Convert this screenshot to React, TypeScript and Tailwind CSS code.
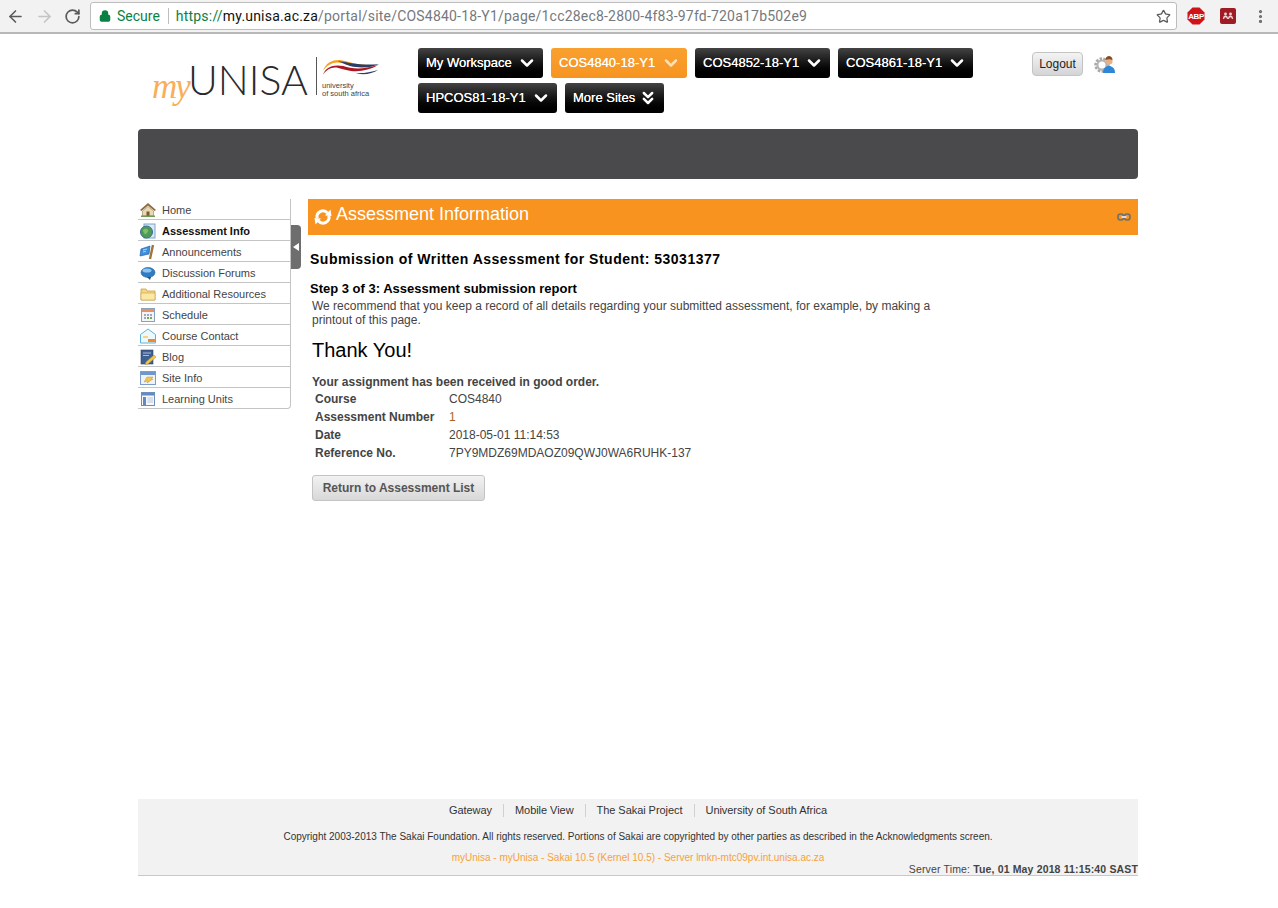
import { ChevronDown, ChevronsDown, ArrowLeft, ArrowRight, RotateCw, Lock, Star, EllipsisVertical } from 'lucide-react';

const sans = { fontFamily: '"Liberation Sans", Arial, sans-serif' };

// small hand drawn tool icons, 16px
function HomeIcon() {
  return (
    <svg width="18" height="16" viewBox="0 0 18 16">
      <path d="M1 8 9 1l8 7-1.5 1L9 3.5 2.5 9z" fill="#8a6a3c" />
      <path d="M3.5 9 9 4.5 14.5 9v5h-11z" fill="#e9d8b4" stroke="#9a8258" strokeWidth=".6" />
      <rect x="7.5" y="9.5" width="3" height="4.5" fill="#7b5a34" />
      <rect x="2" y="13.5" width="14" height="1.5" fill="#6f9a5a" />
    </svg>
  );
}
function AssessIcon() {
  return (
    <svg width="18" height="16" viewBox="0 0 18 16">
      <rect x="5" y="1" width="11" height="14" fill="#dbe8f6" stroke="#7ea3cc" />
      <circle cx="7.500" cy="9" r="6" fill="#4f9a58" stroke="#3a6d8f" />
      <path d="M4 7c2-2 4-1 5 0s-1 3-2 4-3-2-3-4z" fill="#7fbf6a" />
    </svg>
  );
}
function AnnounceIcon() {
  return (
    <svg width="18" height="16" viewBox="0 0 18 16">
      <path d="M2 5 11 2l-1 8-9 2z" fill="#3f8fdc" stroke="#2a62a8" strokeWidth=".7" />
      <path d="M14 1 11 15" stroke="#a0743c" strokeWidth="2.4" />
      <path d="M4 6l4-1M4 8l3-.7" stroke="#cfe6fb" strokeWidth=".8" />
    </svg>
  );
}
function ForumIcon() {
  return (
    <svg width="18" height="16" viewBox="0 0 18 16">
      <ellipse cx="9" cy="7.500" rx="7" ry="5" fill="#2f7cc4" stroke="#245f99" strokeWidth=".6" />
      <ellipse cx="8" cy="5.500" rx="4.500" ry="2" fill="#8fc4ee" />
      <path d="M8 12h4l-1 3z" fill="#3a4a5c" />
    </svg>
  );
}
function FolderIcon() {
  return (
    <svg width="18" height="16" viewBox="0 0 18 16">
      <path d="M2 3h5l1 2h8v9H2z" fill="#f6d77f" stroke="#c9a040" strokeWidth=".8" />
      <path d="M2 7h14v7H2z" fill="#fbe7a6" stroke="#c9a040" strokeWidth=".6" />
    </svg>
  );
}
function ScheduleIcon() {
  return (
    <svg width="18" height="16" viewBox="0 0 18 16">
      <rect x="2.500" y="1.500" width="13" height="13" fill="#f3f3f8" stroke="#8aa0c0" />
      <rect x="3" y="2" width="12" height="3" fill="#e8915a" />
      <path d="M5 7h2v2H5zM8 7h2v2H8zM11 7h2v2h-2zM5 10h2v2H5z" fill="#9aa8c0" />
      <path d="M8 10h2v2H8zM11 10h2v2h-2z" fill="#6fa85a" />
    </svg>
  );
}
function ContactIcon() {
  return (
    <svg width="18" height="16" viewBox="0 0 18 16">
      <path d="M1.500 6.500 9 1l7.500 5.500V15h-15z" fill="#eef7fc" stroke="#58b4dc" />
      <rect x="4" y="8" width="5" height="2" fill="#f5d67a" />
      <rect x="9" y="11" width="7" height="3" fill="#f08a24" />
    </svg>
  );
}
function BlogIcon() {
  return (
    <svg width="18" height="16" viewBox="0 0 18 16">
      <rect x="2" y="1" width="12" height="14" fill="#3f5f8f" stroke="#2c4468" strokeWidth=".6" />
      <path d="M4 4h8M4 6.500h6" stroke="#a9bdd8" />
      <path d="M7 13 15 6l2 2-8 7-3 .5z" fill="#f1c550" stroke="#b98a24" strokeWidth=".5" />
    </svg>
  );
}
function SiteInfoIcon() {
  return (
    <svg width="18" height="16" viewBox="0 0 18 16">
      <rect x="1.500" y="1.500" width="15" height="13" fill="#eef3fa" stroke="#7c9ccb" />
      <rect x="2" y="2" width="14" height="3" fill="#6f96cf" />
      <path d="M5 12 8 7h6l-2 2h2l-6 4 1-2z" fill="#f1c550" stroke="#c49a2c" strokeWidth=".5" />
    </svg>
  );
}
function UnitsIcon() {
  return (
    <svg width="18" height="16" viewBox="0 0 18 16">
      <rect x="2.500" y="1.500" width="13" height="13" fill="#f4f7fb" stroke="#6f8fbb" />
      <rect x="3" y="2" width="12" height="2.500" fill="#5f8ac4" />
      <rect x="4" y="6" width="3" height="8" fill="#5f8ac4" />
      <rect x="8.500" y="6" width="5.500" height="6" fill="#d6dfeb" />
    </svg>
  );
}

const tools = [
  { label: 'Home', icon: <HomeIcon /> },
  { label: 'Assessment Info', icon: <AssessIcon />, active: true },
  { label: 'Announcements', icon: <AnnounceIcon /> },
  { label: 'Discussion Forums', icon: <ForumIcon /> },
  { label: 'Additional Resources', icon: <FolderIcon /> },
  { label: 'Schedule', icon: <ScheduleIcon /> },
  { label: 'Course Contact', icon: <ContactIcon /> },
  { label: 'Blog', icon: <BlogIcon /> },
  { label: 'Site Info', icon: <SiteInfoIcon /> },
  { label: 'Learning Units', icon: <UnitsIcon /> },
];

const details = [
  ['Course', 'COS4840'],
  ['Assessment Number', '1'],
  ['Date', '2018-05-01 11:14:53'],
  ['Reference No.', '7PY9MDZ69MDAOZ09QWJ0WA6RUHK-137'],
];

function SiteTab({ label, width, current, more }: { label: string; width: string; current?: boolean; more?: boolean }) {
  return (
    <div
      className={`flex h-[30px] items-center justify-between rounded-[3px] pl-2 pr-[6px] text-[13px] whitespace-nowrap text-white ${width} ${
        current ? 'bg-gradient-to-b from-[#f9a02f] to-[#f79420]' : 'bg-gradient-to-b from-[#444444] to-[#000000]'
      }`}
    >
      <span className="[text-shadow:0_0_0.4px_#fff]">{label}</span>
      {more ? (
        <ChevronsDown size={20} strokeWidth={3} />
      ) : (
        <ChevronDown size={20} strokeWidth={3} className={current ? 'text-[#fde0b8]' : ''} />
      )}
    </div>
  );
}

function Logo() {
  return (
    <div className="flex h-[70px] w-[280px] shrink-0 items-start pl-[14px]">
      <span className="mt-[19px] w-[36px] text-[35px] leading-[40px] tracking-[-2px] text-[#f9ae58] italic" style={{ fontFamily: '"Liberation Serif", serif' }}>
        my
      </span>
      <span className="mt-[8px] w-[126px] text-[41px] leading-[48px] font-light text-[#2a2a2e]" style={{ fontFamily: 'Lato, sans-serif' }}>
        UNISA
      </span>
      <div className="mt-[9px] ml-[2px] h-[38px] w-px bg-[#555555]" />
      <div className="mt-[10px] ml-[5px] flex flex-col">
        <svg width="58" height="20" viewBox="0 0 60 20">
          <path d="M1 13C4 4 12 1 20 2c8 1 14 5 25 4-8 3-16 2-24-1C13 3 6 6 1 13z" fill="#f7a21e" />
          <path d="M16 3c10 0 18 5 43 3-7 3-18 5-30 2C24 6 20 4 16 3z" fill="#2c3e66" />
          <path d="M1 17C4 8 13 6 22 8c9 3 20 4 36-1-8 5-18 7-28 6-9-1-14-5-20-3-4 1-7 4-9 7z" fill="#ac1622" />
          <path d="M34 15c8 1 16-1 24-3-6 4-16 6-24 3z" fill="#2c3e66" />
        </svg>
        <div className="mt-[4px] text-[7.500px] leading-[8px] whitespace-nowrap text-[#444444]" style={sans}>
          university
          <br />
          of south africa
        </div>
      </div>
    </div>
  );
}

export default function App() {
  return (
    <div className="min-h-[908px] bg-white text-[12px] text-[#333333]" style={sans}>
      {/* browser chrome */}
      <div className="flex h-[34px] items-center border-b-2 border-[#b8b8b8] bg-[#f2f2f2] pl-[6px]">
        <ArrowLeft size={19} strokeWidth={2} className="text-[#5a5a5a]" />
        <ArrowRight size={19} strokeWidth={2} className="ml-[10px] text-[#c4c4c4]" />
        <RotateCw size={17} strokeWidth={2.4} className="ml-[10px] text-[#5a5a5a]" />
        <div className="ml-[9px] flex h-[28px] w-[1087px] shrink-0 items-center rounded-[3px] border border-[#bdbdbd] bg-white pr-[5px] pl-[8px] text-[14px]">
          <Lock size={12} strokeWidth={3} fill="#0b8043" className="text-[#0b8043]" />
          <span className="ml-[6px] text-[#0b8043]" style={{ fontFamily: 'Roboto, sans-serif' }}>Secure</span>
          <div className="mr-[7px] ml-[8px] h-[16px] w-px bg-[#bdbdbd]" />
          <span className="tracking-[0.2px] text-[#75797e]" style={{ fontFamily: 'Roboto, sans-serif' }}>
            <span className="text-[#0b8043]">https://</span>
            <span className="text-[#111111]">my.unisa.ac.za</span>
            /portal/site/COS4840-18-Y1/page/1cc28ec8-2800-4f83-97fd-720a17b502e9
          </span>
          <Star size={15} strokeWidth={2} className="ml-auto text-[#5a5a5a]" />
        </div>
        <svg width="18" height="18" viewBox="0 0 18 18" className="ml-[10px] shrink-0">
          <path d="M5.500 0.500h7l5 5v7l-5 5h-7l-5-5v-7z" fill="#d0121b" />
          <text x="9" y="11.700" textAnchor="middle" fontSize="8" fontWeight="bold" fill="#fff" letterSpacing="-0.4">ABP</text>
        </svg>
        <svg width="16" height="16" viewBox="0 0 16 16" className="ml-[15px] shrink-0">
          <rect width="16" height="16" rx="2" fill="#a01c24" />
          <circle cx="5.500" cy="6" r="1.400" fill="#f4d6d6" />
          <circle cx="10.500" cy="6" r="1.400" fill="#f4d6d6" />
          <path d="M3 11c0-2.500 1-3.500 2.500-3.500S8 8.500 8 11h-1.200c0-1-.4-1.800-1.300-1.800S4.200 10 4.200 11zM8 11c0-2.500 1-3.500 2.500-3.500S13 8.500 13 11h-1.200c0-1-.4-1.800-1.300-1.800S9.200 10 9.200 11z" fill="#f4d6d6" />
        </svg>
        <EllipsisVertical size={17} strokeWidth={2.5} className="ml-[16px] shrink-0 text-[#6a6a6a]" />
      </div>

      <div className="ml-[138px] w-[1000px]">
        {/* header */}
        <div className="flex h-[95px] items-start pt-[14px]">
          <Logo />
          <div className="flex w-[570px] shrink-0 flex-wrap content-start gap-x-[8px] gap-y-[5px]">
            <SiteTab label="My Workspace" width="w-[125px]" />
            <SiteTab label="COS4840-18-Y1" width="w-[136px]" current />
            <SiteTab label="COS4852-18-Y1" width="w-[135px]" />
            <SiteTab label="COS4861-18-Y1" width="w-[135px]" />
            <SiteTab label="HPCOS81-18-Y1" width="w-[139px]" />
            <SiteTab label="More Sites" width="w-[99px]" more />
          </div>
          <div className="mt-[4px] ml-[44px] flex h-[24px] w-[51px] items-center justify-center rounded-[4px] border border-[#c4c4c4] bg-gradient-to-b from-[#f4f4f4] to-[#d4d4d6] text-[12px] text-[#222222]">
            Logout
          </div>
          <svg width="26" height="20" viewBox="0 0 26 20" className="mt-[6px] ml-[9px]">
            <circle cx="10" cy="11" r="6" fill="none" stroke="#a8a8a8" strokeWidth="3.400" strokeDasharray="2.400 1.200" />
            <circle cx="10" cy="11" r="4.500" fill="none" stroke="#b4b4b4" strokeWidth="2" />
            <path d="M11 19c0-5 3-7 6-7s6 2 6 7z" fill="#2f86d8" />
            <circle cx="17" cy="7" r="3.600" fill="#e8b088" />
            <path d="M13.500 6c0-3 2-4 3.500-4s3.500 1 3.500 4c-2-1-5-1-7 0z" fill="#8a4a20" />
          </svg>
        </div>

        {/* dark banner */}
        <div className="h-[50px] rounded-[4px] bg-[#4a4a4c]" />

        <div className="mt-[20px] flex h-[600px] items-start">
          {/* tool menu */}
          <div className="relative w-[153px] shrink-0 rounded-br-[4px] border-r border-b border-[#c4c4c4]">
            {tools.map((t, i) => (
              <div
                key={t.label}
                className={`flex items-center pt-[2px] text-[11px] ${i < tools.length - 1 ? 'h-[21px] border-b border-[#c4c4c4]' : 'h-[20px]'} ${
                  t.active ? 'font-bold text-[#111111]' : 'text-[#444444]'
                }`}
              >
                <span className="ml-[1px] flex w-[23px] shrink-0">{t.icon}</span>
                {t.label}
              </div>
            ))}
            <div className="absolute top-[26px] right-[-11px] flex h-[44px] w-[10px] items-center justify-center rounded-r-[4px] bg-[#6e6e6e]">
              <div className="h-0 w-0 border-y-[4px] border-r-[6px] border-y-transparent border-r-white" />
            </div>
          </div>

          {/* main content */}
          <div className="ml-[17px] w-[830px] shrink-0">
            <div className="flex h-[36px] items-center bg-[#f7931e] pr-[7px] pl-[5px] text-white">
              <svg width="20" height="20" viewBox="0 0 20 20" className="mt-[-1px] shrink-0">
                <path d="M4.200 11.500A6 6 0 0 1 14.500 6" fill="none" stroke="#ffffff" strokeWidth="3" />
                <path d="M15.800 8.500A6 6 0 0 1 5.500 14" fill="none" stroke="#ffffff" strokeWidth="3" />
                <path d="M12 8.500 18.500 9l-1-6.500z" fill="#ffffff" />
                <path d="M8 11.500 1.500 11l1 6.500z" fill="#ffffff" />
              </svg>
              <span className="mt-[-6px] ml-[3px] text-[18px]">Assessment Information</span>
              <svg width="14" height="10" viewBox="0 0 14 10" className="ml-auto">
                <rect x="1" y="2" width="5.500" height="6" rx="2.500" fill="none" stroke="#6f6f6f" strokeWidth="1.600" />
                <rect x="7.500" y="2" width="5.500" height="6" rx="2.500" fill="none" stroke="#6f6f6f" strokeWidth="1.600" />
                <path d="M4.500 5h5" stroke="#e8e8e8" strokeWidth="1.800" />
              </svg>
            </div>

            <h3 className="mt-[16px] ml-[2px] text-[14px] leading-[17px] font-bold tracking-[0.5px] text-black">
              Submission of Written Assessment for Student: 53031377
            </h3>
            <h4 className="mt-[13px] ml-[2px] text-[13px] leading-[15px] font-bold text-black">Step 3 of 3: Assessment submission report</h4>
            <p className="mt-[3px] ml-[4px] w-[640px] text-[12px] leading-[14px] text-[#444444]">
              We recommend that you keep a record of all details regarding your submitted assessment, for example, by making a printout of this page.
            </p>
            <h2 className="mt-[10px] ml-[4px] text-[20px] leading-[26px] font-normal text-black">Thank You!</h2>
            <p className="mt-[12px] ml-[4px] text-[12px] leading-[14px] font-bold text-[#444444]">Your assignment has been received in good order.</p>
            <div className="mt-[1px] ml-[7px]">
              {details.map(([k, v]) => (
                <div key={k} className="flex h-[18px] items-center text-[12px] text-[#444444]">
                  <span className="w-[134px] font-bold">{k}</span>
                  <span className={k === 'Assessment Number' ? 'text-[#a8651e]' : ''}>{v}</span>
                </div>
              ))}
            </div>
            <div className="mt-[13px] ml-[4px] flex h-[26px] w-[173px] items-center justify-center rounded-[3px] border border-[#c4c4c4] bg-gradient-to-b from-[#f2f2f2] to-[#d8d8d8] text-[12px] font-bold text-[#555555]">
              Return to Assessment List
            </div>
          </div>
        </div>

        {/* footer */}
        <div className="relative h-[77px] border-b border-[#c8c8c8] bg-[#f2f2f2] text-center">
          <div className="flex justify-center pt-[5px] text-[11px] leading-[13px] tracking-[-0.05px] text-[#333333]">
            <span className="border-r border-[#d0d0d0] pr-[11px]">Gateway</span>
            <span className="border-r border-[#d0d0d0] px-[11px]">Mobile View</span>
            <span className="border-r border-[#d0d0d0] px-[11px]">The Sakai Project</span>
            <span className="pl-[11px]">University of South Africa</span>
          </div>
          <div className="mt-[14px] text-[10px] leading-[12px] text-[#333333]">
            Copyright 2003-2013 The Sakai Foundation. All rights reserved. Portions of Sakai are copyrighted by other parties as described in the Acknowledgments screen.
          </div>
          <div className="mt-[9px] text-[10px] leading-[12px] text-[#f7a13c]">myUnisa - myUnisa - Sakai 10.5 (Kernel 10.5) - Server lmkn-mtc09pv.int.unisa.ac.za</div>
          <div className="absolute right-0 bottom-0 text-[10.500px] leading-[12px] tracking-[0.15px] text-[#444444]">
            Server Time: <span className="font-bold">Tue, 01 May 2018 11:15:40 SAST</span>
          </div>
        </div>
      </div>
    </div>
  );
}
